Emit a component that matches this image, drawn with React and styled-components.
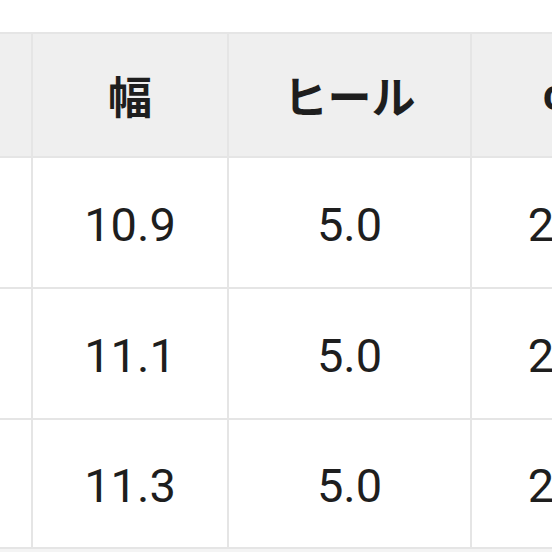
import React from "react";
import styled, { createGlobalStyle } from "styled-components";

const Global = createGlobalStyle`
  html, body { margin: 0; padding: 0; background: #ffffff; }
  body { width: 552px; height: 552px; overflow: hidden; }
`;

const Page = styled.div`
  width: 552px;
  height: 552px;
  overflow: hidden;
  background: #ffffff;
  padding-top: 32px;
  box-sizing: border-box;
`;

const Grid = styled.div`
  display: grid;
  grid-template-columns: 31px 194px 241px 203px;
  grid-template-rows: 122px 129px 129px 127px;
  gap: 2px;
  padding: 2px 0;
  background: #e5e5e5;
  width: max-content;
`;

const Cell = styled.div`
  display: flex;
  align-items: center;
  justify-content: center;
  background: ${(p) => (p.$head ? "#efefef" : "#ffffff")};
  color: #1e1e1e;
  font-family: ${(p) =>
    p.$head
      ? `Roboto, "Noto Sans CJK JP", sans-serif`
      : `Roboto, "Noto Sans", sans-serif`};
  font-size: ${(p) => (p.$head ? "44px" : "47px")};
  font-weight: ${(p) => (p.$head ? 700 : 400)};
  white-space: nowrap;
  overflow: hidden;
  padding-top: ${(p) => (p.$head ? "0" : "3px")};
`;

const Footer = styled.div`
  height: 4px;
  background: #f4f4f4;
`;

const head = ["", "幅", "ヒール", "cm"];
const rows = [
  ["", "10.9", "5.0", "23.0"],
  ["", "11.1", "5.0", "23.5"],
  ["", "11.3", "5.0", "24.0"],
];

export default function App() {
  return (
    <>
      <Global />
      <Page>
        <Grid>
          {head.map((h, i) => (
            <Cell key={"h" + i} $head>
              {h}
            </Cell>
          ))}
          {rows.map((r, ri) =>
            r.map((c, ci) => <Cell key={ri + "-" + ci}>{c}</Cell>)
          )}
        </Grid>
        <Footer />
      </Page>
    </>
  );
}
